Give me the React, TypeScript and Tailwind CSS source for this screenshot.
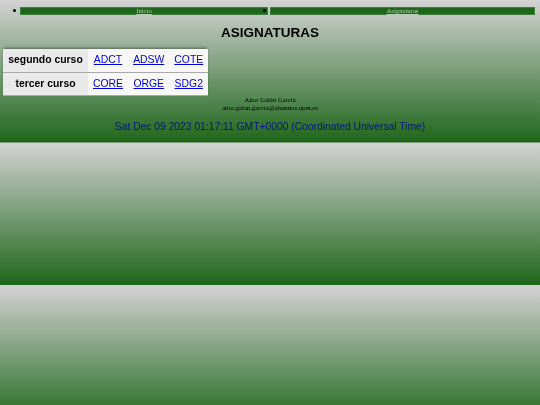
const rows = [
  { title: 'segundo curso', links: ['ADCT', 'ADSW', 'COTE'] },
  { title: 'tercer curso', links: ['CORE', 'ORGE', 'SDG2'] },
];

const App = () => {
  return (
    <div className="min-h-[405px] bg-[linear-gradient(#d3d3d3,#1e661a)] bg-[length:100%_142.5px] font-['Liberation_Sans',sans-serif] overflow-hidden">
      <div className="blur-[0.2px]">
        <ul className="list-none grid grid-cols-[250px_265px] pl-5 pt-[7px] text-[6.7px] text-black">
          <li className="relative mr-0.5 h-2 bg-[#1e661a] border border-[#3f7d3c] text-center leading-[5px] font-['Liberation_Serif',serif] before:absolute before:left-[-8px] before:top-[1px] before:w-[3px] before:h-[3px] before:rounded-full before:bg-black">
            <a href="#" className="underline underline-offset-[0.5px] decoration-[0.5px] text-[#b4d0b2]">Inicio</a>
          </li>
          <li className="relative h-2 bg-[#1e661a] border border-[#3f7d3c] text-center leading-[5px] font-['Liberation_Serif',serif] before:absolute before:left-[-8px] before:top-[1px] before:w-[3px] before:h-[3px] before:rounded-full before:bg-black">
            <a href="#" className="underline underline-offset-[0.5px] decoration-[0.5px] text-[#b4d0b2]">Asignaturas</a>
          </li>
        </ul>
        <h1 className="mt-[10px] text-center text-[13.5px] leading-4 font-bold text-black">ASIGNATURAS</h1>
        <table className="mt-2 ml-[3px] w-[205px] border-collapse text-[10.4px] shadow-[0_-2px_3px_-1px_rgba(0,0,0,0.45)]">
          <tbody>
            {rows.map((row) => (
              <tr key={row.title} className="h-[23px] border-b border-[#a8a8a8]">
                <th className="w-[85px] bg-[#e9e9e9] text-center font-bold text-black">{row.title}</th>
                {row.links.map((link) => (
                  <td key={link} className="bg-[#f8f8f8] text-center">
                    <a href="#" className="underline text-[#0000dd]">{link}</a>
                  </td>
                ))}
              </tr>
            ))}
          </tbody>
        </table>
        <div className="text-center font-['Liberation_Serif',serif] text-[6.7px] leading-2 text-black">
          <p>Aitor Galán García</p>
          <p>aitor.galan.garcia@alumnos.upm.es</p>
        </div>
        <p className="mt-2 text-center text-[10.3px] leading-[13px] text-[#051a70]">
          Sat Dec 09 2023 01:17:11 GMT+0000 (Coordinated Universal Time)
        </p>
      </div>
    </div>
  );
};

export default App;
